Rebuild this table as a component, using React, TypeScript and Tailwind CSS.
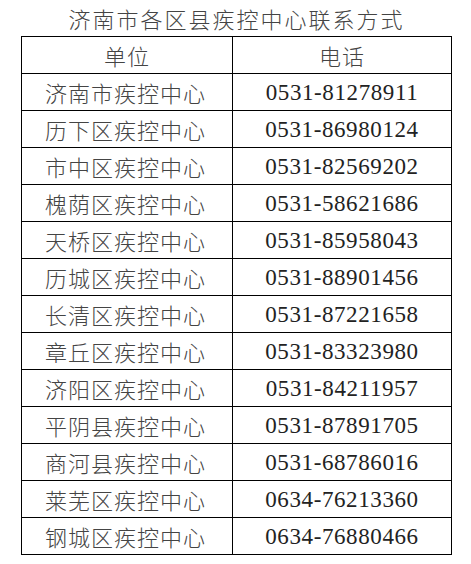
const rows: [string, string][] = [
  ["济南市疾控中心", "0531-81278911"],
  ["历下区疾控中心", "0531-86980124"],
  ["市中区疾控中心", "0531-82569202"],
  ["槐荫区疾控中心", "0531-58621686"],
  ["天桥区疾控中心", "0531-85958043"],
  ["历城区疾控中心", "0531-88901456"],
  ["长清区疾控中心", "0531-87221658"],
  ["章丘区疾控中心", "0531-83323980"],
  ["济阳区疾控中心", "0531-84211957"],
  ["平阴县疾控中心", "0531-87891705"],
  ["商河县疾控中心", "0531-68786016"],
  ["莱芜区疾控中心", "0634-76213360"],
  ["钢城区疾控中心", "0634-76880466"],
];

const cjk = "font-['Noto_Sans_CJK_SC',sans-serif] font-light text-[22px] leading-none text-[#444]";
const num = "font-['Liberation_Serif','Noto_Sans_CJK_SC',serif] text-[23px] leading-none tracking-[0.6px] text-[#222]";
const cell = "flex h-[37px] items-center justify-center border-b border-r border-black";

export default function App() {
  return (
    <div className="h-[564px] w-[471px] overflow-hidden bg-white">
      {/* title */}
      <div className={`flex h-[36px] items-center justify-center pb-[1px] pl-[2px] ${cjk} tracking-[2px]`}>
        济南市各区县疾控中心联系方式
      </div>

      {/* table */}
      <div className="ml-[21px] w-[431px] border-l border-t border-black">
        <div className="flex">
          <div className={`${cell} w-[211px] tracking-[1px] ${cjk}`}>单位</div>
          <div className={`${cell} w-[219px] tracking-[1px] ${cjk}`}>电话</div>
        </div>
        {rows.map(([name, phone]) => (
          <div key={name} className="flex">
            <div className={`${cell} w-[211px] pr-[3px] tracking-[1px] ${cjk}`}>{name}</div>
            <div className={`${cell} w-[219px] ${num}`}>{phone}</div>
          </div>
        ))}
      </div>
    </div>
  );
}
